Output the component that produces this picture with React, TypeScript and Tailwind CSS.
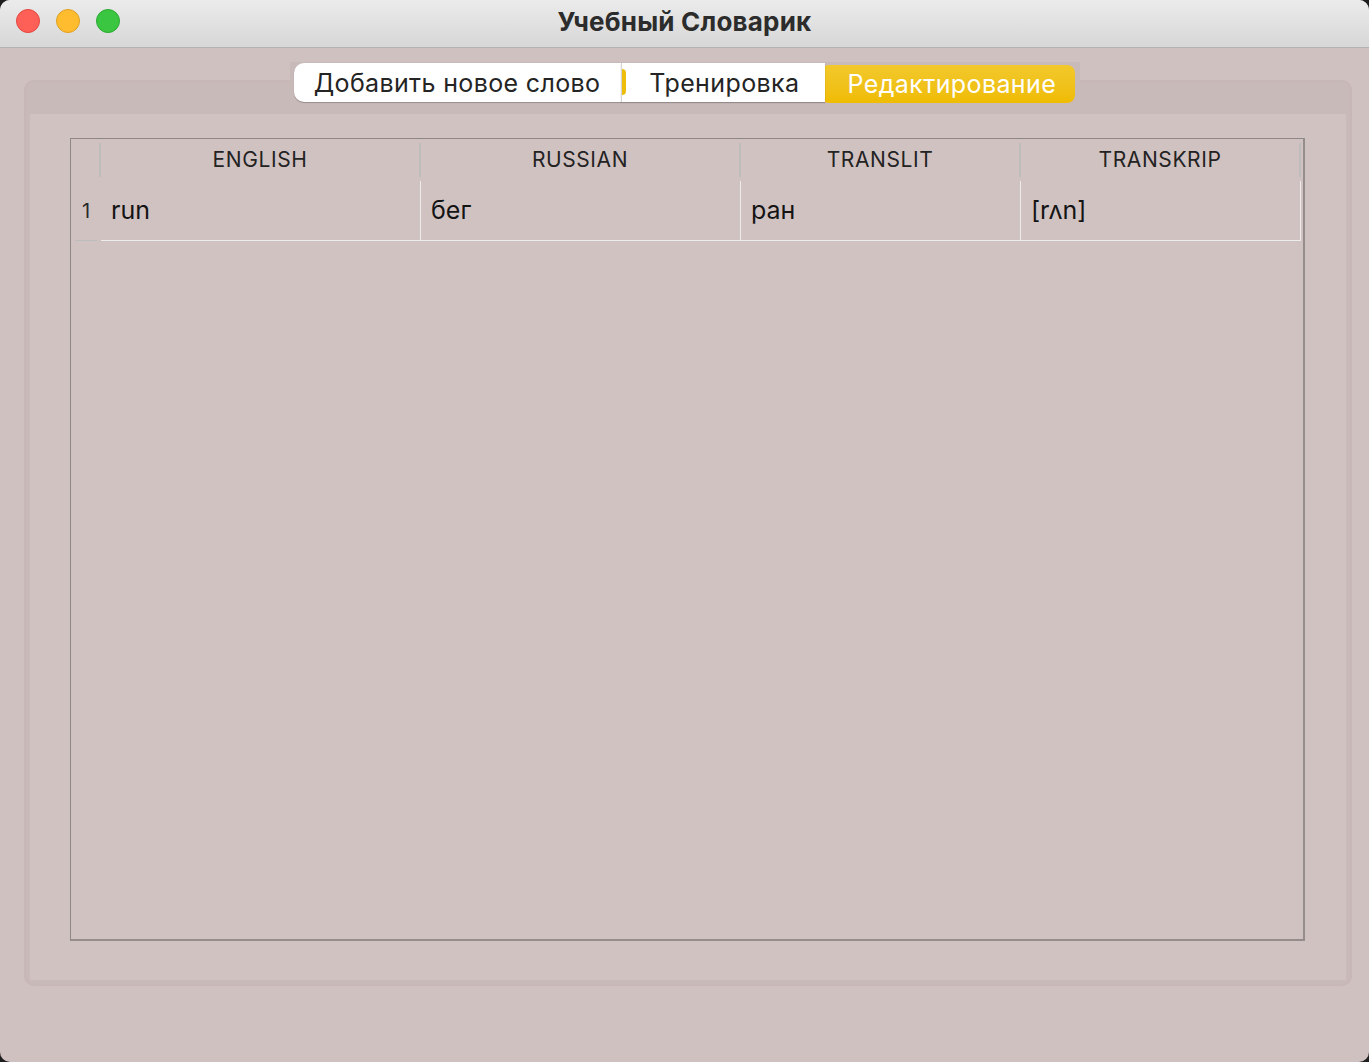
import React from 'react'

const font = { fontFamily: 'Inter, "Noto Sans", sans-serif' }

const columns = [
  { key: 'en', title: 'ENGLISH', w: 'w-[320px]' },
  { key: 'ru', title: 'RUSSIAN', w: 'w-[320px]' },
  { key: 'tr', title: 'TRANSLIT', w: 'w-[280px]' },
  { key: 'ts', title: 'TRANSKRIP', w: 'w-[280px]' },
]

const rows = [{ en: 'run', ru: 'бег', tr: 'ран', ts: '[rʌn]' }]

function TitleBar() {
  return (
    <div className="relative h-[48px] flex items-center justify-center bg-gradient-to-b from-[#ebebeb] to-[#d7d7d7] border-b border-[#b3b3b3]">
      <div className="absolute left-[16px] top-[9px] flex gap-[16px]">
        <span className="w-[24px] h-[24px] rounded-full bg-[#fe5f57] border border-[#e2463f]" />
        <span className="w-[24px] h-[24px] rounded-full bg-[#febc2e] border border-[#dfa023]" />
        <span className="w-[24px] h-[24px] rounded-full bg-[#3bc641] border border-[#2aa831]" />
      </div>
      <span className="-mt-[5px] text-[26px] font-bold text-[#2c2c2c] tracking-[0.2px]">Учебный Словарик</span>
    </div>
  )
}

function Tabs() {
  return (
    <div className="relative z-10 flex items-start self-center mr-[6px] h-[43px] pl-[4px] pr-[5px] bg-[#c9baba]">
      <div className="h-[39px] mt-[1px] pt-[3px] flex items-center bg-white rounded-l-[10px] pl-[20px] pr-[21px] shadow-[0_1px_1px_rgba(0,0,0,0.25)]">
        <span className="text-[25px] tracking-[0.35px] text-[#242424]">Добавить новое слово</span>
      </div>
      <div className="relative h-[39px] mt-[1px] pt-[3px] flex items-center bg-white pl-[27px] pr-[25px] border-l border-[#d4d4d4] shadow-[0_1px_1px_rgba(0,0,0,0.25)]">
        <span className="absolute left-0 top-[6px] w-[4px] h-[26px] rounded-r-full bg-[#eebd0c]" />
        <span className="text-[25px] tracking-[0.4px] text-[#242424]">Тренировка</span>
      </div>
      <div className="h-[38px] mt-[3px] pt-[1px] -ml-[4px] flex items-center rounded-[8px] bg-gradient-to-b from-[#f2c82a] to-[#efbc00] pl-[27px] pr-[19px]">
        <span className="text-[25px] tracking-[0.4px] text-white">Редактирование</span>
      </div>
    </div>
  )
}

function Table() {
  return (
    <div className="flex-1 flex flex-col border-l border-t border-[#8f8686] border-r-2 border-b-2 border-r-[#958c8c] border-b-[#958c8c]">
      <div className="flex h-[42px] items-stretch">
        <div className="w-[30px] shrink-0 flex justify-end py-[4px]">
          <span className="w-[2px] bg-[#bdbdbd]" />
        </div>
        {columns.map((c) => (
          <div key={c.key} className={`${c.w} shrink-0 flex items-center py-[4px]`}>
            <span className="flex-1 text-center text-[21px] tracking-[0.6px] text-[#232323]">{c.title}</span>
            <span className="w-[2px] self-stretch bg-[#bdbdbd]" />
          </div>
        ))}
      </div>
      {rows.map((r, i) => (
        <div key={i} className="flex h-[60px]">
          <div className="w-[30px] shrink-0 flex flex-col">
            <div className="flex-1 flex items-center justify-center text-[20px] text-[#2a2a2a]">{i + 1}</div>
            <div className="h-[1px] mx-[4px] bg-[#bdbdbd]" />
          </div>
          {columns.map((c) => (
            <div
              key={c.key}
              className={`${c.w} shrink-0 flex items-center pl-[10px] text-[25px] text-[#141414] border-r border-b border-[#ececec]`}
            >
              {r[c.key as keyof typeof r]}
            </div>
          ))}
        </div>
      ))}
      <div className="flex-1" />
    </div>
  )
}

export default function App() {
  return (
    <div className="w-[1369px] h-[1062px] bg-[#1e1e1e]" style={font}>
      <div className="w-full h-full rounded-[10px] overflow-hidden bg-[#d0c1c1] flex flex-col">
        <TitleBar />
        <div className="flex flex-col pl-[24px] pr-[17px] pt-[14px]">
          <Tabs />
          <div className="-mt-[25px] h-[906px] flex flex-col rounded-[10px] border-2 border-[#c7b7b7] bg-[#c9baba] pt-[32px] px-[4px] pb-[4px]">
            <div className="flex-1 flex flex-col bg-[#d1c2c2] pl-[40px] pr-[41px] pt-[24px] pb-[39px]">
              <Table />
            </div>
          </div>
        </div>
      </div>
    </div>
  )
}
